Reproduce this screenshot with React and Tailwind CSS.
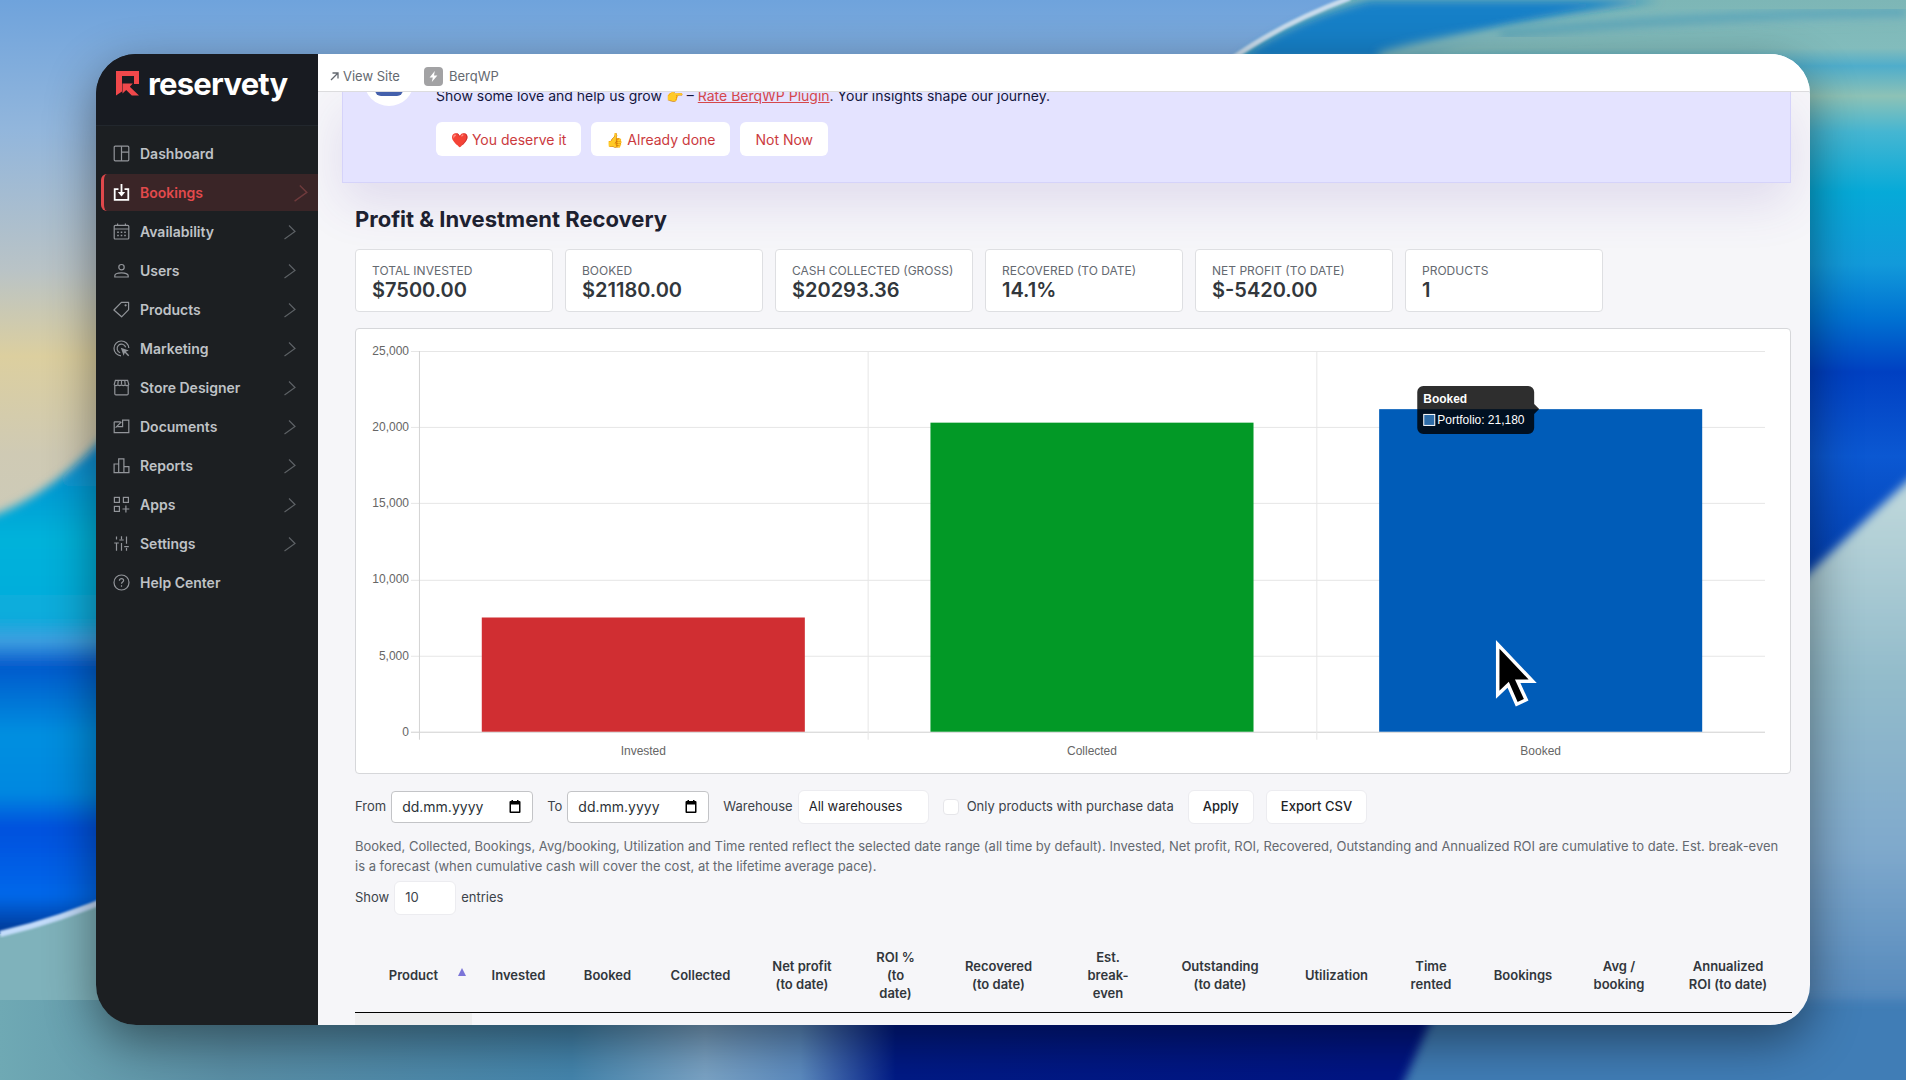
import React, { useState } from 'react'

// ==========================================
// DATA
// ==========================================
const navItems = [
  { name: 'Dashboard', icon: 'dashboard' },
  { name: 'Bookings', icon: 'bookings', active: true, more: true },
  { name: 'Availability', icon: 'availability', more: true },
  { name: 'Users', icon: 'users', more: true },
  { name: 'Products', icon: 'products', more: true },
  { name: 'Marketing', icon: 'marketing', more: true },
  { name: 'Store Designer', icon: 'store', more: true },
  { name: 'Documents', icon: 'documents', more: true },
  { name: 'Reports', icon: 'reports', more: true },
  { name: 'Apps', icon: 'apps', more: true },
  { name: 'Settings', icon: 'settings', more: true },
  { name: 'Help Center', icon: 'help' }
]

const stats = [
  { label: 'TOTAL INVESTED', value: '$7500.00' },
  { label: 'BOOKED', value: '$21180.00' },
  { label: 'CASH COLLECTED (GROSS)', value: '$20293.36' },
  { label: 'RECOVERED (TO DATE)', value: '14.1%' },
  { label: 'NET PROFIT (TO DATE)', value: '$-5420.00' },
  { label: 'PRODUCTS', value: '1' }
]

const bars = [
  { label: 'Invested', value: 7500, color: '#d02e32' },
  { label: 'Collected', value: 20293.36, color: '#029926' },
  { label: 'Booked', value: 21180, color: '#005cb8' }
]

const columns = [
  { lines: ['Product'], width: 'w-[117px]', sorted: true },
  { lines: ['Invested'], width: 'w-[93px]' },
  { lines: ['Booked'], width: 'w-[85px]' },
  { lines: ['Collected'], width: 'w-[101px]' },
  { lines: ['Net profit', '(to date)'], width: 'w-[102px]' },
  { lines: ['ROI %', '(to', 'date)'], width: 'w-[85px]' },
  { lines: ['Recovered', '(to date)'], width: 'w-[121px]' },
  { lines: ['Est.', 'break-', 'even'], width: 'w-[98px]', cell: 'Recovered' },
  { lines: ['Outstanding', '(to date)'], width: 'w-[126px]' },
  { lines: ['Utilization'], width: 'w-[107px]' },
  { lines: ['Time', 'rented'], width: 'w-[82px]' },
  { lines: ['Bookings'], width: 'w-[102px]' },
  { lines: ['Avg /', 'booking'], width: 'w-[90px]' },
  { lines: ['Annualized', 'ROI (to date)'], width: 'w-[128px]' }
]

// ==========================================
// ICONS
// ==========================================
const iconShapes = {
  dashboard: (
    <>
      <rect x="1.2" y="1.2" width="14.6" height="14.6" rx="1" />
      <path d="M8.5 1.2v14.6M8.5 7.2h7.3" />
    </>
  ),
  bookings: (
    <>
      <path d="M5.5 5.2H1.7v10.6h13.6V5.2h-3.8" strokeWidth="1.8" />
      <path d="M8.5 0v9" strokeWidth="1.8" />
      <path d="M4.8 8h7.4l-3.7 4.4z" fill="currentColor" stroke="none" />
    </>
  ),
  availability: (
    <>
      <rect x="1.2" y="2.4" width="14.6" height="13.6" rx="1" />
      <path d="M1.2 6h14.6M4.6 0.4v2M12.4 0.4v2" />
      <path d="M4.2 9.2h1.6M7.7 9.2h1.6M11.2 9.2h1.6M4.2 12.4h1.6M7.7 12.4h1.6M11.2 12.4h1.6" strokeWidth="1.5" />
    </>
  ),
  users: (
    <>
      <circle cx="8.5" cy="5.2" r="2.7" />
      <path d="M1.8 15v-1.2c0-1.9 3.2-3 6.7-3s6.7 1.1 6.7 3V15z" />
    </>
  ),
  products: (
    <>
      <path d="M8.4 1.4h7.2v7.2l-7 7.2L.9 9z" strokeLinejoin="round" />
      <circle cx="12.6" cy="4.3" r=".5" />
    </>
  ),
  marketing: (
    <>
      <path d="M8 15.8A7.4 7.4 0 1 1 15.8 8" />
      <path d="M7.2 12.7A4.4 4.4 0 1 1 12.7 7.2" />
      <path d="M7.8 7.8l8 2.8-3 1.2 3.4 3.4-1 1-3.4-3.4-1.2 3z" fill="currentColor" stroke="none" />
    </>
  ),
  store: (
    <>
      <path d="M1.8 6.5v8.2c0 .8.4 1.2 1.2 1.2h11c.8 0 1.2-.4 1.2-1.2V6.500" />
      <path d="M2.400 1.400h12.200l1.200 4.200c0 1.400-3.600 1.400-3.600 0 0 1.400-3.700 1.400-3.700 0 0 1.400-3.700 1.400-3.700 0 0 1.400-3.600 1.400-3.600 0z" />
      <path d="M5.300 1.400l-.5 4.200M8.500 1.400v4.200M11.700 1.400l.5 4.200" />
    </>
  ),
  documents: (
    <>
      <path d="M1.200 3.800v10.800h14.600V2.200H9.600v6.400H4.200" />
      <path d="M1.200 3.800h6.400M2.600 9.600l5.800-5.800" />
    </>
  ),
  reports: <path d="M1.100 15.600V7h4.600v8.600zM5.700 15.600V1.800h5.200v13.800zM10.900 15.600V9.600h5v6z" />,
  apps: (
    <>
      <rect x="1.400" y="1.400" width="5" height="5" />
      <rect x="10.400" y="1.400" width="5" height="5" />
      <rect x="1.400" y="10.400" width="5" height="5" />
      <path d="M12.900 9.600v6.800M9.500 13h6.800" />
    </>
  ),
  settings: (
    <>
      <path d="M3.500 1.600v3M3.500 8v7.800M1.200 8h4.600M8.500 8v7.800M8.500 1.200v3M6.300 5h4.400M13.500 1.600v7.200M13.500 13v2.800M11.200 11.600h4.600M8.500 4.400v.6" />
    </>
  ),
  help: (
    <>
      <circle cx="8.500" cy="8.500" r="7.500" />
      <path d="M6.400 6.700c0-1.200.9-2 2.100-2s2.100.8 2.100 1.900c0 1.500-2.100 1.500-2.100 3.200M8.500 11.300v1.400" />
    </>
  )
}

const NavIcon = ({ name }) => (
  <svg viewBox="0 0 17 17" className="w-[17px] h-[17px] shrink-0" fill="none" stroke="currentColor" strokeWidth="1.2">
    {iconShapes[name]}
  </svg>
)

const Logo = () => (
  <a href="#" className="h-[72px] pl-5 pb-3 flex items-center gap-2 border-b border-[#22272d] bg-[#181b21]">
    <svg viewBox="0 0 24 25" className="w-6 h-[25px] shrink-0">
      <path fill="#f0484b" d="M0 0h23v13h-5V5H6v15.500L0 24.500z" />
      <path fill="#f0484b" d="M6.500 12.500h10.300l-3 3.200 9.200 8.800h-7.200l-5.600-5.400-3.700 3.500z" />
    </svg>
    <span className="text-[31px] leading-8 font-bold text-white tracking-tight">reservety</span>
  </a>
)

// ==========================================
// SIDEBAR
// ==========================================
const Sidebar = () => (
  <aside className="w-[222px] shrink-0 bg-[#1c1f22]">
    <Logo />
    <nav className="pt-[9px] pl-[5px] flex flex-col gap-0.5">
      {navItems.map((item) => (
        <a
          key={item.name}
          href="#"
          className={
            item.active
              ? 'h-[37px] pl-[9px] pr-[10px] flex items-center gap-[10px] rounded-l-md border-l-[3px] border-[#e0484b] bg-[#3a2527] text-[#e24a4c]'
              : 'h-[37px] pl-3 pr-[22px] flex items-center gap-[10px] text-[#bfc2c6]'
          }
        >
          <span className={item.active ? 'text-white' : 'text-[#92959a]'}>
            <NavIcon name={item.icon} />
          </span>
          <span className="grow text-[14px] leading-5 font-semibold">{item.name}</span>
          {item.more && (
            <svg
              viewBox="0 0 12 16"
              className={item.active ? 'w-[14px] h-5 text-[#6e3a3c]' : 'w-3 h-4 text-[#5d6165]'}
              fill="none"
              stroke="currentColor"
              strokeWidth="1.200"
            >
              <path d="M5 1.500l6 6L.5 15" />
            </svg>
          )}
        </a>
      ))}
    </nav>
  </aside>
)

// ==========================================
// TOP BAR + NOTICE
// ==========================================
const TopBar = () => (
  <header className="relative z-10 h-[38px] shrink-0 pl-3 pt-2 flex items-center gap-6 bg-white border-b border-[#dcdcde] text-[13px] text-[#646970]">
    <a href="#" className="flex items-center gap-1">
      <svg viewBox="0 0 9 9" className="w-[9px] h-[9px]" fill="none" stroke="currentColor" strokeWidth="1.300">
        <path d="M1 8l7-7M2.500 1H8v5.500" />
      </svg>
      View Site
    </a>
    <a href="#" className="flex items-center gap-1.5">
      <svg viewBox="0 0 19 19" className="w-[19px] h-[19px]">
        <rect width="19" height="19" rx="4" fill="#a2a2a4" />
        <path d="M10.800 4l-5.200 6.400h3.200L7.800 15l5.600-6.600H10z" fill="#fff" />
      </svg>
      BerqWP
    </a>
  </header>
)

const Notice = () => (
  <section className="ml-6 mr-[19px] h-[91px] flex gap-[22px] pl-[21px] bg-[#e4e3ff] border border-t-0 border-[#d5d3fa] shadow-[0_20px_50px_rgba(90,60,170,0.14)]">
    <svg viewBox="0 0 50 50" className="w-[50px] h-[50px] -mt-9 shrink-0">
      <circle cx="25" cy="25" r="25" fill="#fff" />
      <rect x="11" y="8" width="28" height="32" rx="6" fill="#4460ac" />
    </svg>
    <div className="-mt-1.5 flex flex-col gap-4">
      <p className="text-[14px] leading-5 text-[#14163c]">
        Show some love and help us grow 👉 –{' '}
        <a href="#" className="text-[#d5474b] underline">Rate BerqWP Plugin</a>. Your insights shape our journey.
      </p>
      <div className="flex gap-[10px] text-[14px] text-[#cb3a3e]">
        <button className="h-[34px] px-[15px] rounded-md bg-white">❤️ You deserve it</button>
        <button className="h-[34px] px-[15px] rounded-md bg-white">👍 Already done</button>
        <button className="h-[34px] px-[15px] rounded-md bg-white">Not Now</button>
      </div>
    </div>
  </section>
)

// ==========================================
// CHART
// ==========================================
const PLOT = { left: 63, right: 1410, top: 22, bottom: 403, max: 25000 }
const CATEGORY = (PLOT.right - PLOT.left) / bars.length
const BAR = CATEGORY * 0.72
const toY = (v) => PLOT.bottom - ((PLOT.bottom - PLOT.top) * v) / PLOT.max

const Chart = () => (
  <div className="bg-white border border-[#d6d7da] rounded">
    <svg
      viewBox="0 0 1435 444"
      className="block w-full h-auto"
      role="img"
      aria-label="Portfolio chart"
      fontFamily="'Liberation Sans', Arial, sans-serif"
      fontSize="12"
      fill="#666"
    >
      {[0, 5000, 10000, 15000, 20000, 25000].map((tick) => (
        <g key={tick}>
          <path d={`M${PLOT.left - 8} ${Math.round(toY(tick)) + 0.5}H${PLOT.right}`} stroke={tick ? '#e6e6e6' : '#cfcfcf'} />
          <text x={PLOT.left - 10} y={toY(tick) + 4} textAnchor="end">{tick.toLocaleString('en-US')}</text>
        </g>
      ))}
      {bars.map((bar, i) => {
        const start = PLOT.left + CATEGORY * i
        return (
          <g key={bar.label}>
            <path d={`M${start + 0.5} ${PLOT.top}V${PLOT.bottom + 8}`} stroke={i ? '#e6e6e6' : '#d4d4d4'} />
            <rect x={start + (CATEGORY - BAR) / 2} y={toY(bar.value)} width={BAR} height={PLOT.bottom - toY(bar.value)} fill={bar.color} />
            <text x={start + CATEGORY / 2} y="426" textAnchor="middle">{bar.label}</text>
          </g>
        )
      })}

      {/* tooltip */}
      <g>
        <path
          d="M1068 57h105a6 6 0 0 1 6 6v12l5 5-5 5v14a6 6 0 0 1-6 6h-105a6 6 0 0 1-6-6V63a6 6 0 0 1 6-6z"
          fill="#000"
          fillOpacity="0.82"
        />
        <text x="1068" y="74" fill="#fff" fontWeight="bold">Booked</text>
        <rect x="1068.500" y="85.500" width="11" height="11" fill="#2d6ca8" stroke="#fff" />
        <text x="1082" y="95" fill="#fff">Portfolio: 21,180</text>
      </g>

      {/* pointer */}
      <path d="M1142.500 315.500v50.500l10.500-10 8.500 19.500 9.500-4.500-8.500-18.500h15z" fill="#000" stroke="#fff" strokeWidth="3.500" />
    </svg>
  </div>
)

// ==========================================
// FILTERS
// ==========================================
const DateField = ({ id, label }) => (
  <div className="flex items-center gap-[5px]">
    <label htmlFor={id}>{label}</label>
    <div className="relative">
      <input
        id={id}
        type="text"
        placeholder="dd.mm.yyyy"
        className="block w-[142px] h-8 pl-[10px] rounded border border-[#c3c4c7] bg-white text-[14px] text-[#2c3338] placeholder:text-[#2c3338]"
      />
      <svg viewBox="0 0 12 13" className="absolute right-3 top-[9px] w-3 h-[13px]">
        <path fill="#000" fillRule="evenodd" d="M1.500 1H2.500V0H4v1h4V0h1.500v1H10.500a1 1 0 0 1 1 1v10a1 1 0 0 1-1 1h-9a1 1 0 0 1-1-1V2a1 1 0 0 1 1-1zM2 4.500v7h8v-7z" />
      </svg>
    </div>
  </div>
)

const Filters = () => {
  const [onlyPurchased, setOnlyPurchased] = useState(false)

  return (
    <div className="mt-4 flex items-center gap-[14px] text-[13px] text-[#3c434a]">
      <DateField id="date-from" label="From" />
      <DateField id="date-to" label="To" />
      <div className="flex items-center gap-[5px]">
        <label htmlFor="warehouse">Warehouse</label>
        <select id="warehouse" className="appearance-none w-[131px] h-[34px] px-[10px] rounded-md border border-[#ececf0] bg-white text-[#1d2327]">
          <option>All warehouses</option>
        </select>
      </div>
      <label className="flex items-center gap-2">
        <input
          type="checkbox"
          checked={onlyPurchased}
          onChange={() => setOnlyPurchased(!onlyPurchased)}
          className="appearance-none w-4 h-4 rounded border border-[#e6e6ea] bg-white"
        />
        Only products with purchase data
      </label>
      <div className="flex gap-3 font-medium text-[#1d2327]">
        <button className="h-[34px] px-[14px] rounded-md border border-[#ececf0] bg-white">Apply</button>
        <button className="h-[34px] px-[14px] rounded-md border border-[#ececf0] bg-white">Export CSV</button>
      </div>
    </div>
  )
}

// ==========================================
// TABLE
// ==========================================
const ProductsTable = () => (
  <table className="mt-6 w-full table-fixed text-[13px] text-center text-[#32373c]">
    <thead>
      <tr className="h-[74px] border-b border-black">
        {columns.map((col) => (
          <th key={col.lines[0]} className={`${col.width} p-0 leading-[18px] font-semibold`}>
            <span className="relative block">
              {col.lines.map((line) => (
                <span key={line} className="block">{line}</span>
              ))}
              {col.sorted && (
                <svg viewBox="0 0 8 8" className="absolute right-[6px] top-0.5 w-2 h-2">
                  <path d="M4 0l4 8H0z" fill="#7b74d8" />
                </svg>
              )}
            </span>
          </th>
        ))}
      </tr>
    </thead>
    <tbody>
      <tr>
        {columns.map((col) => (
          <td key={col.lines[0]} className={col.sorted ? 'h-12 bg-[#eeeeef]' : 'h-12 pt-2 align-top'}>
            {col.cell}
          </td>
        ))}
      </tr>
    </tbody>
  </table>
)

// ==========================================
// WALLPAPER
// ==========================================
const Wallpaper = () => (
  <svg viewBox="0 0 1906 1080" preserveAspectRatio="none" className="absolute inset-0 w-full h-full">
    <defs>
      <linearGradient id="sky" x1="0" y1="0" x2="0" y2="1">
        <stop offset="0" stopColor="#6fa3dc" />
        <stop offset="0.12" stopColor="#92b6dc" />
        <stop offset="0.25" stopColor="#b9c3c6" />
        <stop offset="0.33" stopColor="#dccf9f" />
        <stop offset="0.42" stopColor="#cfcab4" />
        <stop offset="1" stopColor="#b9cdd8" />
      </linearGradient>
      <linearGradient id="waves" gradientUnits="userSpaceOnUse" x1="0" y1="440" x2="0" y2="930">
        <stop offset="0" stopColor="#0a86d0" />
        <stop offset="0.2" stopColor="#02b2da" />
        <stop offset="0.36" stopColor="#08acdc" />
        <stop offset="0.41" stopColor="#3f9fe0" />
        <stop offset="0.46" stopColor="#0459cc" />
        <stop offset="0.6" stopColor="#028fe0" />
        <stop offset="0.72" stopColor="#0288e0" />
        <stop offset="0.79" stopColor="#0250de" />
        <stop offset="0.93" stopColor="#0268ea" />
        <stop offset="1" stopColor="#023a98" />
      </linearGradient>
      <linearGradient id="right" gradientUnits="userSpaceOnUse" x1="0" y1="0" x2="0" y2="600">
        <stop offset="0" stopColor="#7db6b6" />
        <stop offset="0.08" stopColor="#82bcbc" />
        <stop offset="0.11" stopColor="#4fadcb" />
        <stop offset="0.16" stopColor="#8dc2b6" />
        <stop offset="0.22" stopColor="#45b6d2" />
        <stop offset="0.32" stopColor="#06aad8" />
        <stop offset="0.44" stopColor="#129ada" />
        <stop offset="0.53" stopColor="#0072d2" />
        <stop offset="0.62" stopColor="#0040c2" />
        <stop offset="0.76" stopColor="#0b58d2" />
        <stop offset="1" stopColor="#003aac" />
      </linearGradient>
      <linearGradient id="haze" gradientUnits="userSpaceOnUse" x1="0" y1="500" x2="0" y2="1080">
        <stop offset="0" stopColor="#bcd6da" />
        <stop offset="0.3" stopColor="#93bccb" />
        <stop offset="0.6" stopColor="#7fa9cc" />
        <stop offset="1" stopColor="#3f78b4" />
      </linearGradient>
      <linearGradient id="floor" x1="0" y1="0" x2="1" y2="0">
        <stop offset="0" stopColor="#6fa9b4" />
        <stop offset="0.12" stopColor="#5a8fa6" />
        <stop offset="0.3" stopColor="#4485ad" />
        <stop offset="0.37" stopColor="#7ba4c6" />
        <stop offset="0.42" stopColor="#5c8bc0" />
        <stop offset="0.47" stopColor="#001a86" />
        <stop offset="0.72" stopColor="#001585" />
      </linearGradient>
      <filter id="soft"><feGaussianBlur stdDeviation="5" /></filter>
      <filter id="edge"><feGaussianBlur stdDeviation="1" /></filter>
    </defs>
    <rect width="1906" height="1080" fill="url(#sky)" />
    <path d="M-20 520Q50 500 120 420V960H-20z" fill="url(#waves)" filter="url(#soft)" />
    <path d="M0 934Q60 920 120 894H900V1080H0z" fill="#7fb2bb" />
    <path d="M0 940Q60 926 120 900V1080H0z" fill="#7fb2bb" />
    <rect y="1000" width="1906" height="80" fill="url(#floor)" />
    <path d="M0 934Q60 920 120 894" fill="none" stroke="#c3dcfa" strokeWidth="6" filter="url(#edge)" />
    <path d="M1230 60Q1280 24 1350 0H1906V620H1700V60z" fill="url(#right)" />
    <path d="M1236 60Q1290 20 1370 0H1660Q1500 20 1400 60z" fill="#1580c8" filter="url(#soft)" />
    <path d="M1380 60Q1500 20 1906 14" fill="none" stroke="#7fb8bc" strokeWidth="14" filter="url(#soft)" />
    <path d="M1500 34Q1700 14 1906 12" fill="none" stroke="#4f9fb8" strokeWidth="6" filter="url(#soft)" />
    <path d="M1230 60Q1280 24 1350 -2" fill="none" stroke="#c9dcec" strokeWidth="5" filter="url(#edge)" />
    <path d="M1930 460L1780 600V1100H1930z" fill="url(#haze)" filter="url(#soft)" />
    <path d="M1440 1000L1396 1100H1930V1000z" fill="#3f7db6" filter="url(#soft)" />
  </svg>
)

// ==========================================
// PAGE
// ==========================================
const App = () => (
  <div className="relative h-screen overflow-hidden px-24 pt-[54px] pb-[55px] font-[Inter,sans-serif]">
    <Wallpaper />
    <div className="relative h-full flex overflow-hidden rounded-[40px] shadow-[0_16px_50px_rgba(0,0,0,0.45)]">
      <Sidebar />
      <div className="grow min-w-0 flex flex-col bg-[#f6f6f9] overflow-hidden">
        <TopBar />
        <main>
          <Notice />
          <div className="pl-[37px] pr-[19px]">
            <h1 className="mt-5 text-[22px] leading-8 font-bold text-[#1d2130]">Profit &amp; Investment Recovery</h1>
            <div className="mt-[14px] flex gap-3">
              {stats.map((stat) => (
                <div key={stat.label} className="w-[198px] h-[63px] px-4 pt-3 rounded border border-[#dedfe2] bg-white">
                  <div className="text-[12px] leading-[18px] text-[#646970]">{stat.label}</div>
                  <div className="text-[20px] leading-5 font-semibold text-[#32373c]">{stat.value}</div>
                </div>
              ))}
            </div>
            <div className="mt-4">
              <Chart />
            </div>
            <Filters />
            <p className="mt-3 text-[13px] leading-5 text-[#646970]">
              Booked, Collected, Bookings, Avg/booking, Utilization and Time rented reflect the selected date range (all time by default). Invested, Net profit, ROI, Recovered, Outstanding and Annualized ROI are cumulative to date. Est. break-even is a forecast (when cumulative cash will cover the cost, at the lifetime average pace).
            </p>
            <label className="mt-[5px] flex items-center gap-[5px] text-[13px] text-[#3c434a]">
              Show
              <select className="appearance-none w-[62px] h-[34px] px-[10px] rounded-md border border-[#ececf0] bg-white">
                <option>10</option>
              </select>
              entries
            </label>
            <ProductsTable />
          </div>
        </main>
      </div>
    </div>
  </div>
)

export default App
